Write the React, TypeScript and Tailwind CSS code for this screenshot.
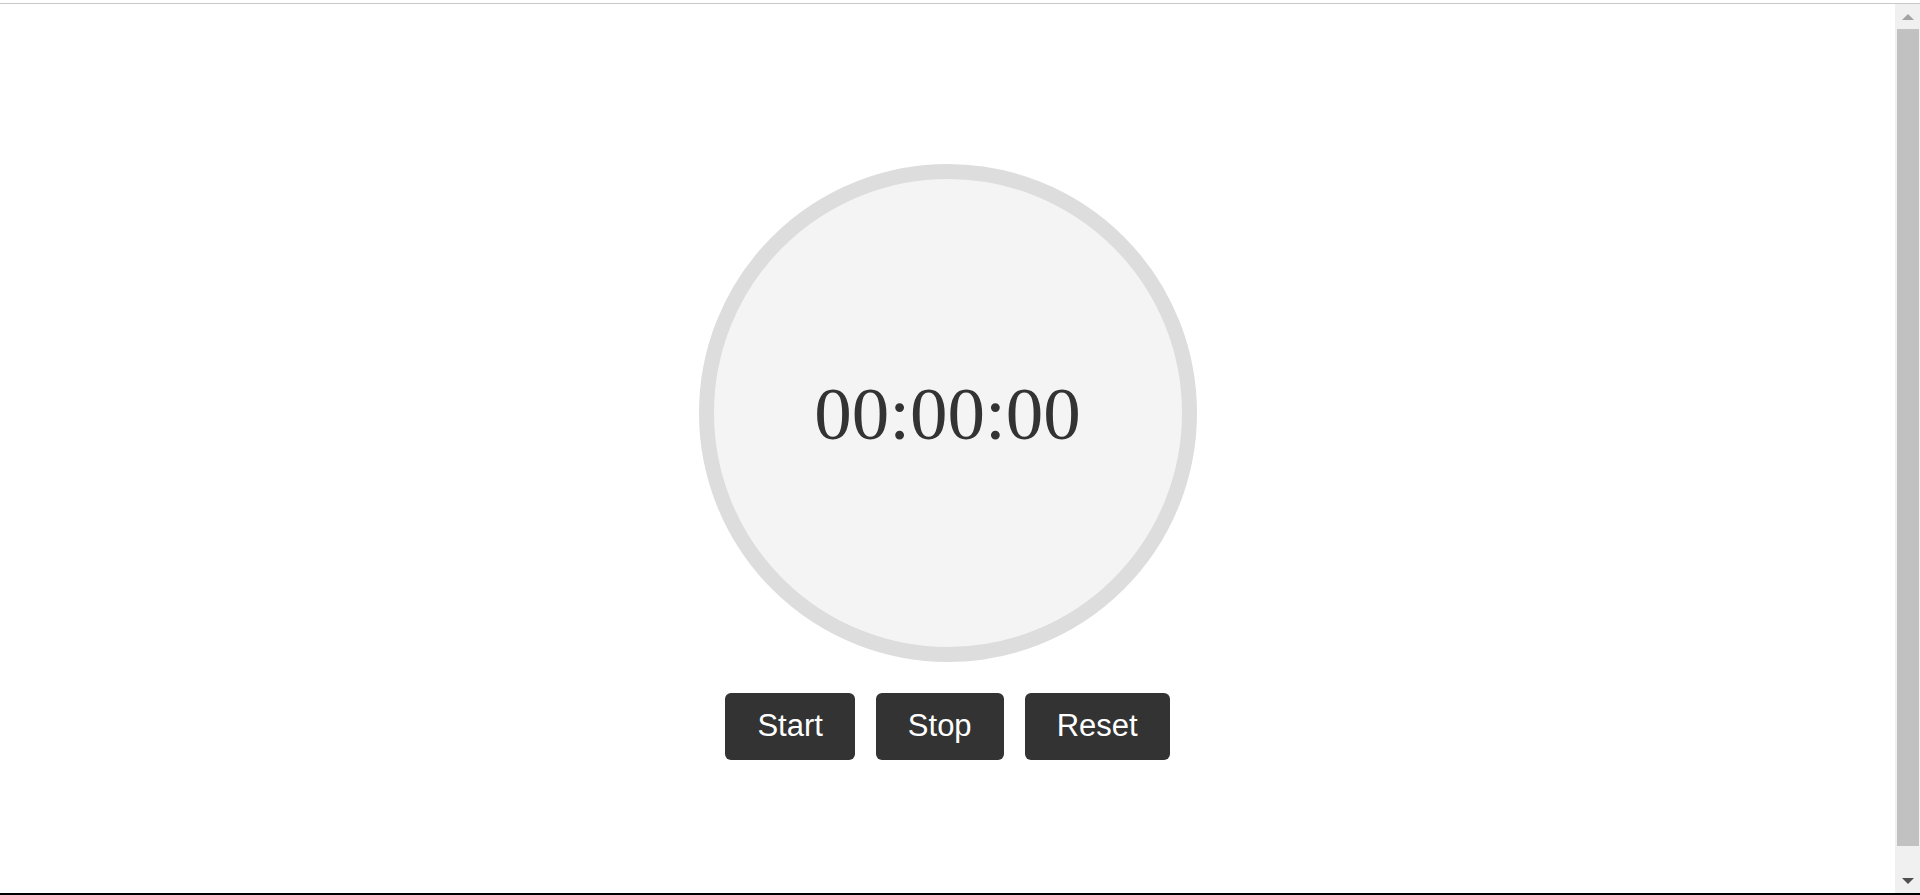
import React from 'react'

const BUTTONS = ['Start', 'Stop', 'Reset']

export default function App() {
  return (
    <div className="h-[895px] w-full flex flex-col bg-white overflow-hidden">
      <div className="h-[3px] bg-white" />
      <div className="h-px bg-[#c8c8c8]" />

      <div className="flex flex-1 min-h-0">
        {/* stopwatch */}
        <main className="flex-1 flex flex-col items-center pt-[160px]">
          <div className="w-[498px] h-[498px] rounded-full border-[15px] border-[#dddddd] bg-[#f4f4f4] flex items-center justify-center">
            <span className="text-[75px] leading-none text-[#333333] font-['Liberation_Serif','Times_New_Roman',serif]">
              00:00:00
            </span>
          </div>

          <div className="mt-[31px] flex gap-[21px]">
            {BUTTONS.map((label) => (
              <button
                key={label}
                className="h-[67px] px-[32px] rounded-[6px] bg-[#333333] text-white text-[31px] font-['Liberation_Sans',Arial,sans-serif]"
              >
                {label}
              </button>
            ))}
          </div>
        </main>

        {/* fake browser scrollbar */}
        <div className="w-[25px] bg-[#f0f0f0] flex flex-col">
          <div className="h-[25px] flex items-center justify-center">
            <div className="w-0 h-0 border-x-[6px] border-x-transparent border-b-[6px] border-b-[#a3a3a3]" />
          </div>
          <div className="h-[817px] ml-[2px] mr-px bg-[#c1c1c1]" />
          <div className="flex-1" />
          <div className="h-[25px] flex items-center justify-center">
            <div className="w-0 h-0 border-x-[6px] border-x-transparent border-t-[6px] border-t-[#505050]" />
          </div>
        </div>
      </div>

      <div className="h-[2px] bg-black" />
    </div>
  )
}
